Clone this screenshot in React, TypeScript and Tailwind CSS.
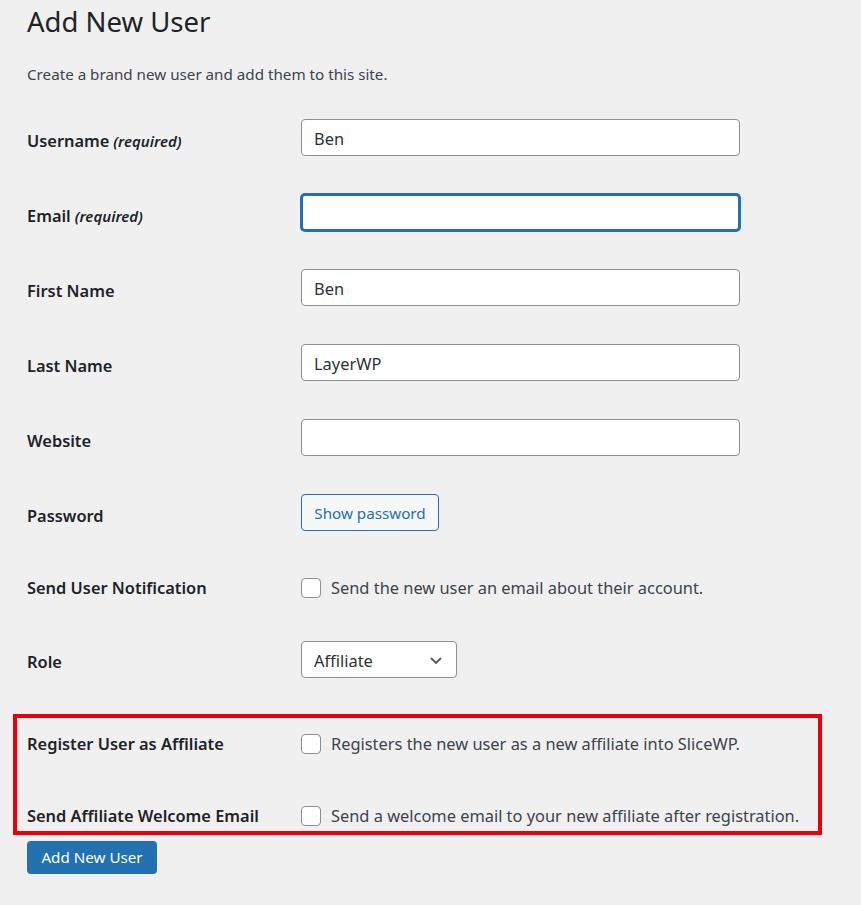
import React from "react";

const font = { fontFamily: '"Noto Sans", "Open Sans", sans-serif' };

function Label({ children }: { children: React.ReactNode }) {
  return (
    <div className="w-[274px] shrink-0 text-[16.4px] font-semibold text-[#1d2327] leading-6">
      {children}
    </div>
  );
}

function Req() {
  return <span className="italic text-[15px] font-semibold"> (required)</span>;
}

function TextInput({ value, focused }: { value?: string; focused?: boolean }) {
  return (
    <div
      className={
        "w-[439px] h-[37px] bg-white rounded-[4px] flex items-center px-[12px] pt-[4px] text-[16.4px] text-[#2c3338] " +
        (focused
          ? "border-2 border-[#2271b1] shadow-[0_0_0_1px_#2271b1]"
          : "border border-[#8c8f94]")
      }
    >
      {value}
    </div>
  );
}

function Checkbox() {
  return (
    <div className="w-[20px] h-[20px] bg-white border border-[#8c8f94] rounded-[4px] shrink-0" />
  );
}

export default function App() {
  return (
    <div className="min-h-[905px] w-full bg-[#f0f0f1] pl-[27px] text-[#1d2327]" style={font}>
      <h1 className="pt-[3px] text-[27.5px] leading-[38px] font-normal text-[#1d2327]">Add New User</h1>
      <p className="mt-[21px] text-[15.2px] leading-6 text-[#3c434a]">
        Create a brand new user and add them to this site.
      </p>

      <div className="mt-[33px] flex flex-col">
        <div className="flex h-[75px] items-start">
          <div className="pt-[10px]">
            <Label>
              Username<Req />
            </Label>
          </div>
          <TextInput value="Ben" />
        </div>
        <div className="flex h-[75px] items-start">
          <div className="pt-[10px]">
            <Label>
              Email<Req />
            </Label>
          </div>
          <TextInput focused />
        </div>
        <div className="flex h-[75px] items-start">
          <div className="pt-[10px]">
            <Label>First Name</Label>
          </div>
          <TextInput value="Ben" />
        </div>
        <div className="flex h-[75px] items-start">
          <div className="pt-[10px]">
            <Label>Last Name</Label>
          </div>
          <TextInput value="LayerWP" />
        </div>
        <div className="flex h-[75px] items-start">
          <div className="pt-[10px]">
            <Label>Website</Label>
          </div>
          <TextInput />
        </div>
        <div className="flex h-[75px] items-start">
          <div className="pt-[10px]">
            <Label>Password</Label>
          </div>
          <button className="h-[37px] w-[138px] rounded-[4px] border border-[#2271b1] bg-[#f6f7f7] pt-[2px] text-[15.2px] text-[#2271b1]">
            Show password
          </button>
        </div>
        <div className="flex h-[72px] items-start pt-[7px]">
          <Label>Send User Notification</Label>
          <div className="flex items-center gap-[10px] h-6">
            <Checkbox />
            <span className="text-[16.4px] text-[#3c434a]">Send the new user an email about their account.</span>
          </div>
        </div>
        <div className="flex h-[72px] items-start">
          <div className="pt-[9px]">
            <Label>Role</Label>
          </div>
          <div className="w-[156px] h-[37px] bg-white border border-[#8c8f94] rounded-[4px] flex items-center justify-between pl-[12px] pr-[12px] text-[16.4px] text-[#2c3338]">
            <span className="pt-[4px]">Affiliate</span>
            <svg width="16" height="16" viewBox="0 0 16 16" fill="none">
              <path d="M3 6l5 5 5-5" stroke="#50575e" strokeWidth="1.8" />
            </svg>
          </div>
        </div>
      </div>

      <div className="ml-[-14px] mt-[1px] w-[809px] h-[121px] border-4 border-[#e8000b] pl-[10px] pt-[14px]">
        <div className="flex h-[72px] items-start">
          <Label>Register User as Affiliate</Label>
          <div className="flex items-center gap-[10px] h-6">
            <Checkbox />
            <span className="text-[16.4px] text-[#3c434a]">
              Registers the new user as a new affiliate into SliceWP.
            </span>
          </div>
        </div>
        <div className="flex items-start">
          <Label>Send Affiliate Welcome Email</Label>
          <div className="flex items-center gap-[10px] h-6">
            <Checkbox />
            <span className="text-[16.4px] text-[#3c434a]">
              Send a welcome email to your new affiliate after registration.
            </span>
          </div>
        </div>
      </div>

      <button className="mt-[6px] h-[33px] w-[130px] rounded-[4px] bg-[#2271b1] text-[15.2px] text-white">
        Add New User
      </button>
    </div>
  );
}
